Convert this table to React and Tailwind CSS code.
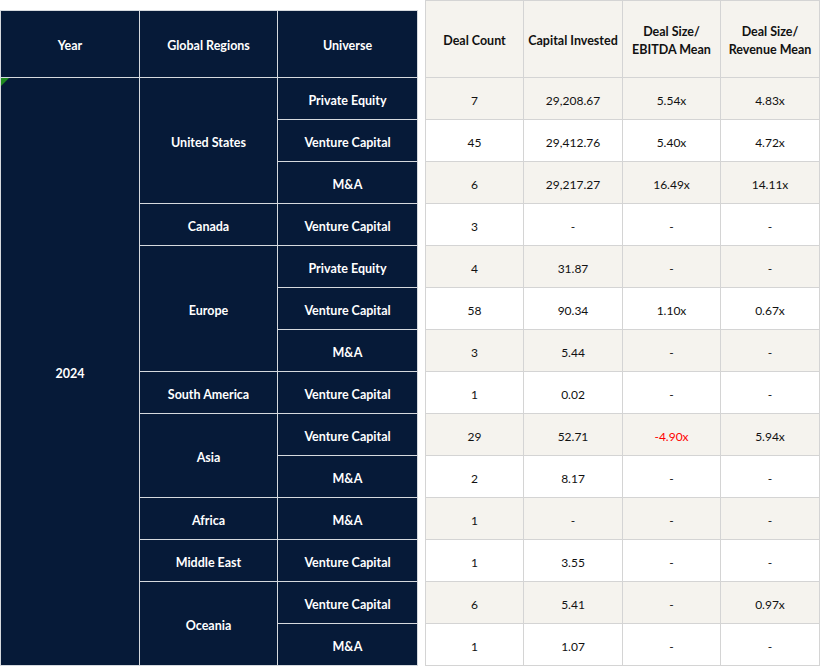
const groups = [
  { region: "United States", items: ["Private Equity", "Venture Capital", "M&A"] },
  { region: "Canada", items: ["Venture Capital"] },
  { region: "Europe", items: ["Private Equity", "Venture Capital", "M&A"] },
  { region: "South America", items: ["Venture Capital"] },
  { region: "Asia", items: ["Venture Capital", "M&A"] },
  { region: "Africa", items: ["M&A"] },
  { region: "Middle East", items: ["Venture Capital"] },
  { region: "Oceania", items: ["Venture Capital", "M&A"] },
];

const rows = [
  ["7", "29,208.67", "5.54x", "4.83x"],
  ["45", "29,412.76", "5.40x", "4.72x"],
  ["6", "29,217.27", "16.49x", "14.11x"],
  ["3", "-", "-", "-"],
  ["4", "31.87", "-", "-"],
  ["58", "90.34", "1.10x", "0.67x"],
  ["3", "5.44", "-", "-"],
  ["1", "0.02", "-", "-"],
  ["29", "52.71", "-4.90x", "5.94x"],
  ["2", "8.17", "-", "-"],
  ["1", "-", "-", "-"],
  ["1", "3.55", "-", "-"],
  ["6", "5.41", "-", "0.97x"],
  ["1", "1.07", "-", "-"],
];

const navy = "bg-[#061a38] text-white font-bold flex items-center justify-center pt-[5px]";
const head = "bg-[#f5f3ee] h-[76px] flex items-center justify-center text-center font-bold pt-[4px]";

export default function App() {
  return (
    <div className="flex items-start bg-white w-[820px] h-[668px] text-[12.5px] font-['Lato','Open_Sans',sans-serif]">
      {/* left dimensions table */}
      <div className="mt-[10px] bg-[#d5d9de] p-px flex flex-col gap-px">
        <div className="flex gap-px h-[66px]">
          <div className={`${navy} w-[138px]`}>Year</div>
          <div className={`${navy} w-[137px]`}>Global Regions</div>
          <div className={`${navy} w-[139px]`}>Universe</div>
        </div>
        <div className="flex gap-px">
          <div className={`${navy} w-[138px] relative`}>
            <span className="absolute left-0 top-0 w-0 h-0 border-t-[8px] border-r-[8px] border-t-[#1e8a1e] border-r-transparent" />
            2024
          </div>
          <div className="flex flex-col gap-px">
            {groups.map((g) => (
              <div key={g.region} className="flex gap-px">
                <div className={`${navy} w-[137px]`}>{g.region}</div>
                <div className="flex flex-col gap-px">
                  {g.items.map((u, i) => (
                    <div key={i} className={`${navy} w-[139px] h-[41px]`}>{u}</div>
                  ))}
                </div>
              </div>
            ))}
          </div>
        </div>
      </div>

      {/* right metrics table */}
      <div className="ml-[7px] bg-[#d4d4d4] p-px grid grid-cols-[97px_98px_97px_98px] gap-px text-[#111]">
        <div className={head}>Deal Count</div>
        <div className={head}>Capital Invested</div>
        <div className={`${head} leading-[18px]`}>
          Deal Size/<br />EBITDA Mean
        </div>
        <div className={`${head} leading-[18px]`}>
          Deal Size/<br />Revenue Mean
        </div>
        {rows.map((r, i) =>
          r.map((v, j) => (
            <div
              key={`${i}-${j}`}
              className={`h-[41px] flex items-center justify-center pt-[5px] text-[12px] ${i % 2 === 0 ? "bg-[#f5f3ee]" : "bg-white"} ${v.startsWith("-") && v.length > 1 ? "text-[#ff0000]" : ""}`}
            >
              {v}
            </div>
          ))
        )}
      </div>
    </div>
  );
}
